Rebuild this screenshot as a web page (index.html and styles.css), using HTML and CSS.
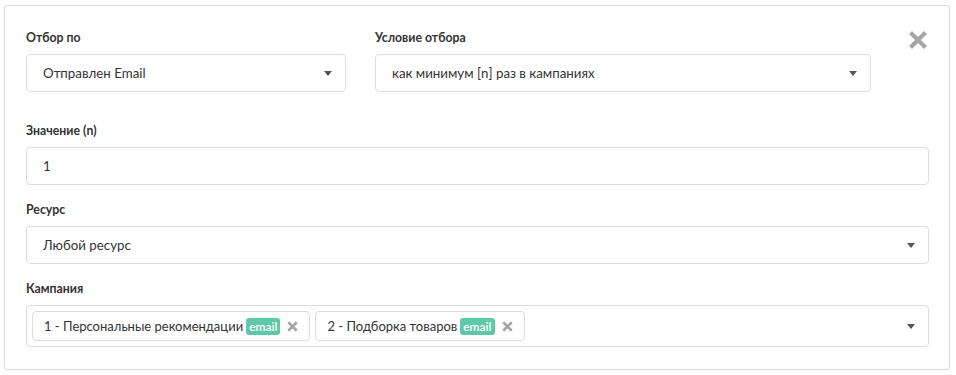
FILE: index.html
```html
<!DOCTYPE html>
<html lang="ru">
<head>
  <meta charset="UTF-8">
  <meta name="viewport" content="width=device-width, initial-scale=1.0">
  <title>Условие сегмента</title>
  <link rel="stylesheet" href="styles.css">
</head>
<body>
  <div class="filter-card">
    <div class="top-row">
      <div class="field">
        <label class="field-label">Отбор по</label>
        <div class="select-box">
          <span>Отправлен Email</span>
          <span class="caret"></span>
        </div>
      </div>
      <div class="field">
        <label class="field-label">Условие отбора</label>
        <div class="select-box">
          <span>как минимум [n] раз в кампаниях</span>
          <span class="caret"></span>
        </div>
      </div>
      <div class="remove-cell">
        <svg class="remove-icon" width="18" height="18" viewBox="0 0 18 18">
          <path d="M3 3 L15 15 M15 3 L3 15" stroke="#a6a6a6" stroke-width="4.2" stroke-linecap="square"/>
        </svg>
      </div>
    </div>

    <div class="field">
      <label class="field-label">Значение (n)</label>
      <div class="input-box">1</div>
    </div>

    <div class="field">
      <label class="field-label">Ресурс</label>
      <div class="select-box">
        <span>Любой ресурс</span>
        <span class="caret"></span>
      </div>
    </div>

    <div class="field">
      <label class="field-label">Кампания</label>
      <div class="multi-box">
        <div class="tags">
          <div class="tag">1 - Персональные рекомендации <span class="badge">email</span>
            <svg class="tag-x" width="11" height="11" viewBox="0 0 10 10"><path d="M2 2 L8 8 M8 2 L2 8" stroke="#a6a6a6" stroke-width="2.4" stroke-linecap="square"/></svg>
          </div>
          <div class="tag">2 - Подборка товаров <span class="badge">email</span>
            <svg class="tag-x" width="11" height="11" viewBox="0 0 10 10"><path d="M2 2 L8 8 M8 2 L2 8" stroke="#a6a6a6" stroke-width="2.4" stroke-linecap="square"/></svg>
          </div>
        </div>
        <span class="caret"></span>
      </div>
    </div>
  </div>
</body>
</html>
```

FILE: styles.css
```css
body {
  margin: 0;
  padding: 5px 6px 0 4px;
  background-color: #fff;
  font-family: "Source Sans Pro", Lato, "Open Sans", sans-serif;
  color: #333;
}

.filter-card {
  border: 1px solid #ddd;
  border-radius: 3px;
  box-shadow: 0 1px 2px rgba(0, 0, 0, 0.08);
  padding: 24px 20px 20px 21px;
  height: 319px;
}

.top-row {
  display: grid;
  grid-template-columns: 320px 496px 1fr;
  column-gap: 29px;
  margin-bottom: 14px;
}

.field {
  margin-bottom: 17px;
}

.field-label {
  display: block;
  font-size: 12.3px;
  font-weight: bold;
  margin-bottom: 9px;
}

.select-box,
.input-box {
  display: flex;
  align-items: center;
  justify-content: space-between;
  height: 36px;
  padding: 0 13px 0 16px;
  border: 1px solid #ddd;
  border-radius: 4px;
  font-size: 13.3px;
}

.caret {
  width: 0;
  height: 0;
  border-left: 4px solid transparent;
  border-right: 4px solid transparent;
  border-top: 5px solid #555;
}

.remove-cell {
  display: flex;
  justify-content: flex-end;
  padding-top: 1px;
  padding-right: 2px;
}

.multi-box {
  display: flex;
  align-items: center;
  justify-content: space-between;
  height: 40px;
  padding: 0 13px 0 5px;
  border: 1px solid #ddd;
  border-radius: 4px;
}

.tags {
  display: flex;
  gap: 5px;
}

.tag {
  display: flex;
  align-items: center;
  height: 28px;
  padding: 0 11px 0 11px;
  border: 1px solid #ddd;
  border-radius: 4px;
  font-size: 13px;
}

.badge {
  margin-left: 3px;
  padding: 1px 3px;
  background-color: #5fc9a7;
  color: #fff;
  border-radius: 3px;
  font-size: 12px;
  font-weight: 600;
}

.tag-x {
  margin-left: 7px;
}
```
